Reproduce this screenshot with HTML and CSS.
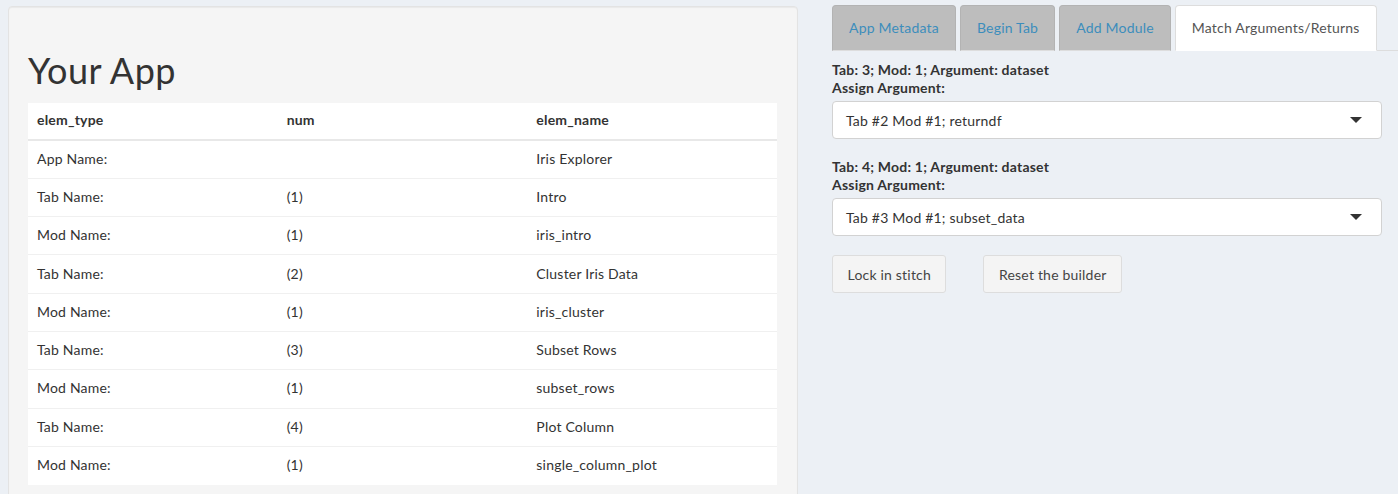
FILE: index.html
```html
<!DOCTYPE html>
<html>
<head>
<meta charset="utf-8">
<link rel="stylesheet" href="styles.css">
</head>
<body>
<div class="page">
  <div class="well">
    <h1 class="title">Your App</h1>
    <table class="grid">
      <thead>
        <tr><th>elem_type</th><th>num</th><th>elem_name</th></tr>
      </thead>
      <tbody>
        <tr><td>App Name:</td><td></td><td>Iris Explorer</td></tr>
        <tr><td>Tab Name:</td><td>(1)</td><td>Intro</td></tr>
        <tr><td>Mod Name:</td><td>(1)</td><td>iris_intro</td></tr>
        <tr><td>Tab Name:</td><td>(2)</td><td>Cluster Iris Data</td></tr>
        <tr><td>Mod Name:</td><td>(1)</td><td>iris_cluster</td></tr>
        <tr><td>Tab Name:</td><td>(3)</td><td>Subset Rows</td></tr>
        <tr><td>Mod Name:</td><td>(1)</td><td>subset_rows</td></tr>
        <tr><td>Tab Name:</td><td>(4)</td><td>Plot Column</td></tr>
        <tr><td>Mod Name:</td><td>(1)</td><td>single_column_plot</td></tr>
      </tbody>
    </table>
  </div>
  <div class="side">
    <ul class="tabs">
      <li class="tab">App Metadata</li>
      <li class="tab">Begin Tab</li>
      <li class="tab">Add Module</li>
      <li class="tab active">Match Arguments/Returns</li>
      <li class="tab-fill"></li>
    </ul>
    <div class="pane">
      <div class="group">
        <div class="label">Tab: 3; Mod: 1; Argument: dataset</div>
        <div class="label">Assign Argument:</div>
        <div class="select"><span>Tab #2 Mod #1; returndf</span><span class="caret"></span></div>
      </div>
      <div class="group">
        <div class="label">Tab: 4; Mod: 1; Argument: dataset</div>
        <div class="label">Assign Argument:</div>
        <div class="select"><span>Tab #3 Mod #1; subset_data</span><span class="caret"></span></div>
      </div>
      <div class="buttons">
        <button class="btn">Lock in stitch</button>
        <button class="btn">Reset the builder</button>
      </div>
    </div>
  </div>
</div>
</body>
</html>
```
FILE: styles.css
```css
* { box-sizing: border-box; }
html, body {
  margin: 0;
  background: #ecf0f5;
  font-family: Lato, "Liberation Sans", sans-serif;
  font-size: 14px;
  letter-spacing: 0.2px;
  color: #333;
}
.page {
  display: flex;
  align-items: flex-start;
  padding: 5px 0 0 8px;
  gap: 34px;
}
.well {
  width: 790px;
  margin-top: 1px;
  background: #f5f5f5;
  border: 1px solid #e3e3e3;
  border-radius: 4px;
  padding: 19px 20px 19px 19px;
  box-shadow: inset 0 1px 1px rgba(0,0,0,0.05);
}
.title {
  margin: 0;
  padding-top: 24px;
  height: 77px;
  font-size: 36px;
  font-weight: 400;
  letter-spacing: 0.5px;
  line-height: 40px;
  color: #333;
}
.grid {
  width: 749px;
  border-collapse: collapse;
  background: #fff;
  table-layout: fixed;
}
.grid th, .grid td {
  text-align: left;
  padding: 7px 8px 9px 9px;
}
.grid th {
  font-weight: 700;
  height: 36.7px;
  border-bottom: 2px solid #e8e8e8;
  line-height: 18px;
}
.grid td {
  height: 38.33px;
  line-height: 21px;
  border-top: 1px solid #f0f0f0;
}
.grid tbody tr:first-child td { border-top: none; height: 37.33px; }
.side {
  flex: 1;
  display: flex;
  flex-direction: column;
}
.tabs {
  list-style: none;
  margin: 0;
  padding: 0;
  display: flex;
  align-items: flex-end;
  gap: 4px;
  height: 46px;
}
.tab {
  height: 46px;
  padding: 12px 16px 0;
  line-height: 20px;
  background: #bdbdbd;
  border: 1px solid #b3b3b3;
  border-bottom: 1px solid #ddd;
  border-radius: 4px 4px 0 0;
  color: #3c8dbc;
}
.tab.active {
  background: #fff;
  color: #555;
  border-color: #ddd;
  border-bottom-color: #fff;
}
.tab-fill {
  flex: 1;
  height: 1px;
  background: #ddd;
  margin-left: -4px;
}
.pane {
  width: 550px;
  padding-top: 10px;
}
.group {
  margin-bottom: 19px;
}
.label {
  font-weight: 700;
  line-height: 18px;
}
.select {
  margin-top: 4px;
  height: 38px;
  background: #fff;
  border: 1px solid #d2d2d2;
  border-radius: 4px;
  padding: 0 19px 0 13px;
  display: flex;
  align-items: center;
  justify-content: space-between;
  color: #333;
}
.caret {
  width: 0;
  height: 0;
  border-left: 6px solid transparent;
  border-right: 6px solid transparent;
  border-top: 6px solid #333;
}
.buttons {
  display: flex;
  gap: 37px;
  margin-top: 1px;
}
.btn {
  height: 38px;
  padding: 0 14.5px;
  font-family: inherit;
  font-size: 14px;
  letter-spacing: 0.2px;
  color: #444;
  background: #f4f4f4;
  border: 1px solid #ddd;
  border-radius: 3px;
}
```
